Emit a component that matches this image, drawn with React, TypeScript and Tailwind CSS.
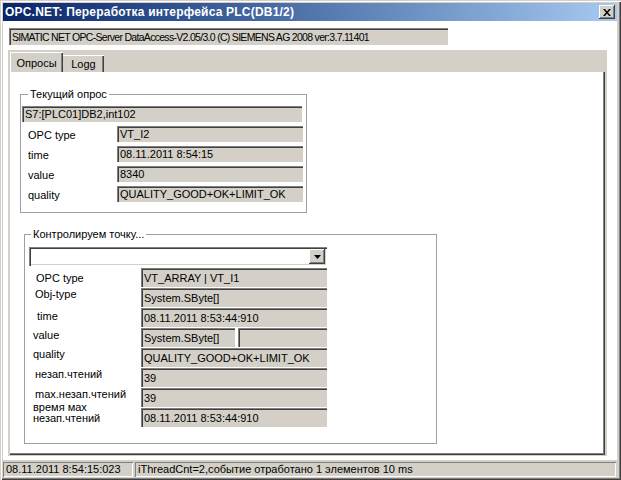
import React from "react";

const sunken =
  "bg-[#d4d0c8] shadow-[inset_1px_1px_0_#808080,inset_2px_2px_0_#404040]";
const raised =
  "bg-[#d4d0c8] shadow-[inset_-1px_-1px_0_#404040,inset_1px_1px_0_#ffffff,inset_-2px_-2px_0_#808080]";

function Field({ children, className = "" }: { children?: React.ReactNode; className?: string }) {
  return (
    <div
      className={`${sunken} flex items-center overflow-hidden whitespace-nowrap pl-[3px] pt-[1px] leading-[13px] ${className}`}
    >
      {children}
    </div>
  );
}

function GroupBox({
  title,
  titleLeft,
  className = "",
  children,
}: {
  title: string;
  titleLeft: string;
  className?: string;
  children: React.ReactNode;
}) {
  return (
    <div className={`relative border border-[#a0a0a0] ${className}`}>
      <span
        className={`absolute top-[-7px] ${titleLeft} bg-white px-[2px] leading-[13px]`}
      >
        {title}
      </span>
      {children}
    </div>
  );
}

const current = [
  { label: "OPC type", value: "VT_I2" },
  { label: "time", value: "08.11.2011 8:54:15" },
  { label: "value", value: "8340" },
  { label: "quality", value: "QUALITY_GOOD+OK+LIMIT_OK" },
];

export default function App() {
  return (
    <div
      className="flex h-[480px] w-[621px] flex-col bg-[#d4d0c8] pb-[2px] pl-[3px] pr-[4px] pt-[3px] text-[11px] text-black shadow-[inset_1px_1px_0_#d4d0c8,inset_2px_2px_0_#ffffff,inset_-1px_-1px_0_#404040,inset_-2px_-2px_0_#808080]"
      style={{ fontFamily: '"Liberation Sans", Arial, sans-serif' }}
    >
      {/* title bar */}
      <div className="flex h-[18px] shrink-0 items-center justify-between bg-gradient-to-r from-[#0a246a] to-[#a6caf0] pl-[2px] pr-[2px]">
        <span className="text-[12px] font-bold leading-[14px] tracking-[0.2px] text-white">
          OPC.NET: Переработка интерфейса PLC(DB1/2)
        </span>
        <div className={`${raised} flex h-[14px] w-[16px] items-center justify-center`}>
          <svg width="8" height="7" viewBox="0 0 8 7">
            <path d="M0 0h2l2 2.5L6 0h2L5 3.5 8 7H6L4 4.5 2 7H0l3-3.5z" fill="#000" />
          </svg>
        </div>
      </div>

      {/* client */}
      <div className="flex flex-1 flex-col bg-white">
        <Field className="ml-[6px] mt-[7px] h-[17px] w-[439px] text-[10.5px] tracking-[-0.7px]">
          SIMATIC NET OPC-Server DataAccess-V2.05/3.0 (C) SIEMENS AG 2008 ver:3.7.11401
        </Field>

        {/* tab control */}
        <div className="ml-[5px] mt-[5px] flex h-[406px] w-[599px] flex-col bg-[#d4d0c8] pl-[2px] pt-[2px]">
          <div className="flex h-[20px] items-end">
            <div className="flex h-[20px] w-[53px] items-center justify-center bg-[#d4d0c8] pt-[2px] shadow-[inset_1px_1px_0_#ffffff,inset_-1px_0_0_#404040,inset_-2px_0_0_#808080]">
              Опросы
            </div>
            <div className="flex h-[17px] w-[41px] items-center justify-center bg-[#d4d0c8] pt-[2px] shadow-[inset_0_1px_0_#ffffff,inset_-1px_0_0_#404040,inset_-2px_0_0_#808080]">
              Logg
            </div>
          </div>

          {/* page */}
          <div className="flex h-[383px] w-[595px] flex-col bg-white shadow-[inset_-1px_-1px_0_#404040,inset_-2px_-2px_0_#808080]">
            <GroupBox
              title="Текущий опрос"
              titleLeft="left-[7px]"
              className="ml-[10px] mt-[22px] h-[119px] w-[287px]"
            >
              <div className="flex flex-col pl-[1px] pt-[11px]">
                <Field className="h-[16px] w-[280px]">S7:[PLC01]DB2,int102</Field>
                {current.map((r) => (
                  <div key={r.label} className="mt-[4px] flex h-[16px]">
                    <div className="w-[95px] pl-[6px] pt-[3px] leading-[13px]">{r.label}</div>
                    <Field className="h-[16px] w-[186px]">{r.value}</Field>
                  </div>
                ))}
              </div>
            </GroupBox>

            <GroupBox
              title="Контролируем точку..."
              titleLeft="left-[6px]"
              className="ml-[14px] mt-[21px] h-[210px] w-[413px]"
            >
              <div className="flex flex-col pl-[4px] pt-[12px]">
                <div className="flex h-[19px] w-[298px] justify-end bg-white p-[2px] shadow-[inset_1px_1px_0_#808080,inset_2px_2px_0_#404040,inset_-1px_-1px_0_#ffffff,inset_-2px_-2px_0_#d4d0c8]">
                  <div className={`${raised} flex h-[15px] w-[16px] items-center justify-center`}>
                    <svg width="7" height="4" viewBox="0 0 7 4">
                      <path d="M0 0h7L3.5 4z" fill="#000" />
                    </svg>
                  </div>
                </div>

                <div className="mt-[2px] flex h-[19px]">
                  <div className="w-[112px] pl-[7px] pt-[4px] leading-[13px]">OPC type</div>
                  <Field className="h-[19px] w-[186px]">VT_ARRAY | VT_I1</Field>
                </div>
                <div className="mt-[1px] flex h-[19px]">
                  <div className="w-[112px] pl-[6px] pt-[0px] leading-[13px]">Obj-type</div>
                  <Field className="h-[19px] w-[186px]">System.SByte[]</Field>
                </div>
                <div className="mt-[1px] flex h-[19px]">
                  <div className="w-[112px] pl-[8px] pt-[2px] leading-[13px]">time</div>
                  <Field className="h-[19px] w-[186px]">08.11.2011 8:53:44:910</Field>
                </div>
                <div className="mt-[1px] flex h-[19px]">
                  <div className="w-[112px] pl-[4px] pt-[1px] leading-[13px]">value</div>
                  <Field className="h-[19px] w-[94px]">System.SByte[]</Field>
                  <Field className="ml-[3px] h-[19px] w-[89px]" />
                </div>
                <div className="mt-[1px] flex h-[19px]">
                  <div className="w-[112px] pl-[4px] pt-[0px] leading-[13px]">quality</div>
                  <Field className="h-[19px] w-[186px]">QUALITY_GOOD+OK+LIMIT_OK</Field>
                </div>
                <div className="mt-[1px] flex h-[19px]">
                  <div className="w-[112px] pl-[6px] pt-[0px] leading-[13px]">незап.чтений</div>
                  <Field className="h-[19px] w-[186px]">39</Field>
                </div>
                <div className="mt-[1px] flex h-[19px]">
                  <div className="w-[112px] pl-[6px] pt-[0px] leading-[13px]">max.незап.чтений</div>
                  <Field className="h-[19px] w-[186px]">39</Field>
                </div>
                <div className="mt-[1px] flex h-[19px]">
                  <div className="mt-[-6px] w-[112px] pl-[4px] leading-[11px]">
                    время мах
                    <br />
                    незап.чтений
                  </div>
                  <Field className="h-[19px] w-[186px]">08.11.2011 8:53:44:910</Field>
                </div>
              </div>
            </GroupBox>
          </div>
        </div>

        {/* status bar */}
        <div className="mt-auto flex h-[18px] bg-[#d4d0c8] pt-[2px]">
          <div className="flex h-[15px] w-[130px] items-center whitespace-nowrap pl-[3px] shadow-[inset_1px_1px_0_#808080,inset_-1px_-1px_0_#ffffff]">
            08.11.2011 8:54:15:023
          </div>
          <div className="ml-[2px] mr-[1px] flex h-[15px] flex-1 items-center whitespace-nowrap pl-[3px] shadow-[inset_1px_1px_0_#808080,inset_-1px_-1px_0_#ffffff]">
            iThreadCnt=2,событие отработано 1 элементов 10 ms
          </div>
        </div>
      </div>
    </div>
  );
}
